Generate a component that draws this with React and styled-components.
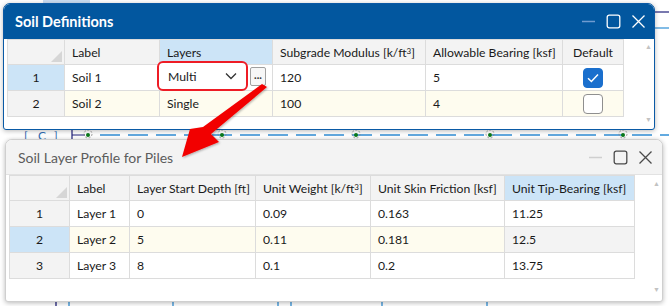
import React from 'react';
import styled, { createGlobalStyle } from 'styled-components';

const GlobalStyle = createGlobalStyle`
    body {
        margin: 0;
        font-family: Lato, "Noto Sans", sans-serif;
        background: #fff;
    }
`

const Desktop = styled.div`
    position: relative;
    width: 669px;
    height: 306px;
    overflow: hidden;
    background: #fff;
    display: flex;
    flex-direction: column;
    padding: 3px 0 0 0;
    box-sizing: border-box;
`

const Backdrop = styled.svg`
    position: absolute;
    left: 0;
    top: 0;
    width: 669px;
    height: 306px;
`

const Win = styled.div`
    position: relative;
    width: ${p => p.$w}px;
    height: ${p => p.$h}px;
    margin: ${p => p.$m};
    background: #fff;
    border: 1px solid ${p => p.$active ? '#0a5aa6' : '#cfcfcf'};
    border-radius: 7px 7px 3px 3px;
    box-shadow: 0 1px 5px rgba(0,0,0,0.28);
    box-sizing: border-box;
    display: flex;
    flex-direction: column;
    overflow: hidden;
`

const TitleBar = styled.div`
    height: 34px;
    flex: none;
    display: flex;
    align-items: center;
    justify-content: space-between;
    padding: 0 0 0 ${p => p.$active ? 11 : 12}px;
    background: ${p => p.$active ? '#02579f' : '#f3f3f3'};
    border-bottom: 1px solid ${p => p.$active ? '#02579f' : '#e2e2e2'};
    color: ${p => p.$active ? '#fff' : '#5c5c5c'};
    font-size: ${p => p.$active ? 14.5 : 14}px;
    font-weight: ${p => p.$active ? 700 : 400};
`

const Controls = styled.div`
    display: flex;
    align-items: center;
    gap: 10px;
    padding-right: ${p => p.$pr}px;
    svg { display: block; }
`

const Body = styled.div`
    flex: 1;
    display: flex;
    padding: 0 0 0 ${p => p.$pl}px;
`

const Grid = styled.div`
    display: grid;
    grid-template-columns: ${p => p.$cols};
    grid-auto-rows: 26px;
    grid-template-rows: 25px;
    align-content: start;
    font-size: 12.2px;
    color: #1a1a1a;
    border-right: 1px solid #dcdcdc;
    border-bottom: 1px solid #dcdcdc;
    align-self: flex-start;
`

const Cell = styled.div`
    position: relative;
    display: flex;
    align-items: center;
    justify-content: ${p => p.$center ? 'center' : 'flex-start'};
    padding: 0 7px;
    border-left: 1px solid #dcdcdc;
    border-top: 1px solid #dcdcdc;
    background: ${p => p.$bg || '#fff'};
    white-space: nowrap;
    overflow: visible;
    sup { font-size: 8px; line-height: 0; position: relative; top: -1px; }
`

const Corner = styled.div`
    position: absolute;
    right: 2px;
    bottom: 2px;
    width: 0;
    height: 0;
    border-left: 11px solid transparent;
    border-bottom: 11px solid #d6d6d6;
`

const Scroll = styled.div`
    flex: 1;
    display: flex;
    flex-direction: column;
    align-items: flex-end;
    justify-content: space-between;
    padding: ${p => p.$pad};
    color: #c2c2c2;
    font-size: 7px;
    line-height: 7px;
`

const Combo = styled.div`
    position: absolute;
    left: -3px;
    top: -4px;
    width: 91px;
    height: 30px;
    box-sizing: border-box;
    border: 2px solid #ee1c25;
    border-radius: 6px;
    background: #fff;
    display: flex;
    align-items: center;
    justify-content: space-between;
    padding: 0 9px 0 9px;
    z-index: 2;
    svg { display: block; }
`

const Dots = styled.div`
    position: absolute;
    left: 90px;
    top: 2px;
    width: 16px;
    height: 19px;
    box-sizing: border-box;
    border: 1px solid #a0a0a0;
    border-radius: 2px;
    background: #f7f7f7;
    display: flex;
    align-items: center;
    justify-content: center;
    font-size: 11px;
    font-weight: 700;
    color: #333;
    z-index: 2;
    line-height: 1;
    padding-bottom: 4px;
`

const Check = styled.div`
    width: 20px;
    height: 20px;
    box-sizing: border-box;
    border-radius: 4px;
    border: 1px solid ${p => p.$on ? '#1a6fcd' : '#8f8f8f'};
    background: ${p => p.$on ? '#1a6fcd' : '#fff'};
    display: flex;
    align-items: center;
    justify-content: center;
`

const Arrow = styled.svg`
    position: absolute;
    left: 0;
    top: 0;
    width: 669px;
    height: 306px;
    pointer-events: none;
    z-index: 5;
`

const HDR = '#f3f3f3'
const SEL = '#cce4f7'
const CREAM = '#fefcef'

const WinControls = ({ active, pr }) => {
    const c = active ? '#fff' : '#4a4a4a'
    const m = active ? '#6f9bd0' : '#cfcfcf'
    return (
        <Controls $pr={pr}>
            <svg width="15" height="15" viewBox="0 0 15 15"><path d="M1 7.5h13" stroke={m} strokeWidth="1.3" /></svg>
            <svg width="15" height="15" viewBox="0 0 15 15"><rect x="1.2" y="1.2" width="12.6" height="12.6" rx="2" fill="none" stroke={c} strokeWidth="1.3" /></svg>
            <svg width="15" height="15" viewBox="0 0 15 15"><path d="M1.5 1.5l12 12M13.5 1.5l-12 12" stroke={c} strokeWidth="1.3" /></svg>
        </Controls>
    )
}

const SOILS = [
    { n: 1, label: 'Soil 1', layers: 'Multi', mod: '120', bear: '5', def: true },
    { n: 2, label: 'Soil 2', layers: 'Single', mod: '100', bear: '4', def: false },
]

const LAYERS = [
    { n: 1, label: 'Layer 1', depth: '0', w: '0.09', skin: '0.163', tip: '11.25' },
    { n: 2, label: 'Layer 2', depth: '5', w: '0.11', skin: '0.181', tip: '12.5' },
    { n: 3, label: 'Layer 3', depth: '8', w: '0.1', skin: '0.2', tip: '13.75' },
]

const Drawing = () => {
    const dash = "20 8"
    return (
        <Backdrop viewBox="0 0 669 306">
            <rect x="43" y="0" width="47" height="3" fill="#c9ddf2" />
            <path d="M655 12h14" stroke="#20207a" strokeWidth="1.2" />
            <path d="M655 28h14" stroke="#2f8fd6" strokeWidth="1.2" />
            <text x="24" y="140" fontSize="12" fill="#2f6db5" fontFamily="Lato">[</text>
            <text x="38" y="140" fontSize="12" fill="#2f6db5" fontFamily="Lato">C</text>
            <text x="54" y="140" fontSize="12" fill="#2f6db5" fontFamily="Lato">]</text>
            <path d="M72 130v9M72 135h13" stroke="#20207a" strokeWidth="1.2" />
            <path d="M100 135H669" stroke="#2f8fd6" strokeWidth="1.3" strokeDasharray={dash} />
            {[88, 222, 356, 490, 623].map(x => (
                <g key={x}>
                    <circle cx={x} cy="134" r="4" fill="none" stroke="#888" strokeWidth="0.8" strokeDasharray="2 1.5" />
                    <circle cx={x} cy="135" r="2" fill="#0a7a1a" />
                </g>
            ))}
            {[56, 69, 173, 278, 291, 382, 487].map((x, i) => (
                <path key={x} d={`M${x} 300v6`} stroke={i === 0 ? '#20207a' : '#2f8fd6'} strokeWidth="1.3" />
            ))}
        </Backdrop>
    )
}

const App = () => {
    return (
        <>
            <GlobalStyle />
            <Desktop>
                <Drawing />
                <Win $active $w={652} $h={127} $m="0 0 0 3px">
                    <TitleBar $active>
                        <span>Soil Definitions</span>
                        <WinControls active pr={8} />
                    </TitleBar>
                    <Body $pl={3}>
                        <Grid $cols="57px 95px 113px 153px 137px 61px">
                            <Cell $bg={HDR}><Corner /></Cell>
                            <Cell $bg={HDR}>Label</Cell>
                            <Cell $bg={SEL}>Layers</Cell>
                            <Cell $bg={HDR}>Subgrade Modulus [k/ft<sup>3</sup>]</Cell>
                            <Cell $bg={HDR}>Allowable Bearing [ksf]</Cell>
                            <Cell $bg={HDR} $center>Default</Cell>
                            {SOILS.map((s, idx) => {
                                const bg = idx === 1 ? CREAM : '#fff'
                                return (
                                    <React.Fragment key={s.n}>
                                        <Cell $bg={idx === 0 ? SEL : HDR} $center>{s.n}</Cell>
                                        <Cell $bg={bg}>{s.label}</Cell>
                                        <Cell $bg={bg}>
                                            {idx === 0 ? (
                                                <>
                                                    <Combo>
                                                        <span>{s.layers}</span>
                                                        <svg width="12" height="8" viewBox="0 0 12 8"><path d="M1 1.5l5 5 5-5" fill="none" stroke="#333" strokeWidth="1.3" /></svg>
                                                    </Combo>
                                                    <Dots>...</Dots>
                                                </>
                                            ) : s.layers}
                                        </Cell>
                                        <Cell $bg={bg}>{s.mod}</Cell>
                                        <Cell $bg={bg}>{s.bear}</Cell>
                                        <Cell $bg={bg} $center>
                                            <Check $on={s.def}>
                                                {s.def && <svg width="12" height="10" viewBox="0 0 12 10"><path d="M1 5.2l3.4 3.3L11 1.5" fill="none" stroke="#fff" strokeWidth="1.5" /></svg>}
                                            </Check>
                                        </Cell>
                                    </React.Fragment>
                                )
                            })}
                        </Grid>
                        <Scroll $pad="4px 2px 6px 0">
                            <span>▲</span>
                            <span>▼</span>
                        </Scroll>
                    </Body>
                </Win>
                <Win $w={658} $h={163} $m="9px 0 0 5px">
                    <TitleBar>
                        <span>Soil Layer Profile for Piles</span>
                        <WinControls pr={9} />
                    </TitleBar>
                    <Body $pl={3}>
                        <Grid $cols="60px 60px 126px 115px 134px 130px">
                            <Cell $bg={HDR}><Corner /></Cell>
                            <Cell $bg={HDR}>Label</Cell>
                            <Cell $bg={HDR}>Layer Start Depth [ft]</Cell>
                            <Cell $bg={HDR}>Unit Weight [k/ft<sup>3</sup>]</Cell>
                            <Cell $bg={HDR}>Unit Skin Friction [ksf]</Cell>
                            <Cell $bg={SEL}>Unit Tip-Bearing [ksf]</Cell>
                            {LAYERS.map((l, idx) => {
                                const bg = idx === 1 ? CREAM : '#fff'
                                return (
                                    <React.Fragment key={l.n}>
                                        <Cell $bg={idx === 1 ? SEL : HDR} $center>{l.n}</Cell>
                                        <Cell $bg={bg}>{l.label}</Cell>
                                        <Cell $bg={bg}>{l.depth}</Cell>
                                        <Cell $bg={bg}>{l.w}</Cell>
                                        <Cell $bg={bg}>{l.skin}</Cell>
                                        <Cell $bg={idx === 1 ? HDR : '#fff'}>{l.tip}</Cell>
                                    </React.Fragment>
                                )
                            })}
                        </Grid>
                        <Scroll $pad="5px 2px 8px 0">
                            <span>▲</span>
                            <span>▼</span>
                        </Scroll>
                    </Body>
                </Win>
                <Arrow viewBox="0 0 669 306">
                    <defs>
                        <filter id="sh" x="-20%" y="-20%" width="140%" height="140%">
                            <feDropShadow dx="1" dy="1" stdDeviation="1.2" floodColor="#000" floodOpacity="0.3" />
                        </filter>
                    </defs>
                    <polygon points="262,84 267,87 211,134 219,142 182,157 190,129 203,127" fill="#f20000" filter="url(#sh)" />
                </Arrow>
            </Desktop>
        </>
    )
}

export default App
